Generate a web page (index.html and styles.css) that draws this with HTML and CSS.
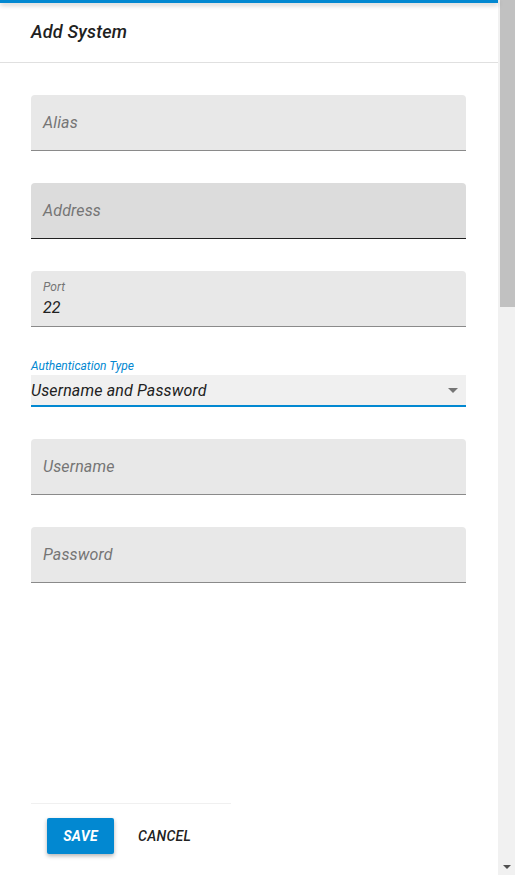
FILE: index.html
```html
<!DOCTYPE html>
<html>
<head>
<meta charset="utf-8">
<link rel="stylesheet" href="styles.css">
</head>
<body>
<div class="page">
  <div class="dialog">
    <div class="topbar"></div>
    <div class="header"><h1 class="title">Add System</h1></div>
    <form class="form">
      <div class="field"><span class="placeholder">Alias</span></div>
      <div class="field field-hover"><span class="placeholder">Address</span></div>
      <div class="field field-filled">
        <span class="small-label">Port</span>
        <span class="value">22</span>
      </div>
      <div class="select-wrap">
        <span class="select-label">Authentication Type</span>
        <div class="select">
          <span class="select-value">Username and Password</span>
          <span class="caret"></span>
        </div>
      </div>
      <div class="field"><span class="placeholder">Username</span></div>
      <div class="field"><span class="placeholder">Password</span></div>
    </form>
    <div class="footer">
      <div class="footer-line"></div>
      <div class="actions">
        <button type="button" class="btn btn-save">SAVE</button>
        <button type="button" class="btn btn-cancel">CANCEL</button>
      </div>
    </div>
  </div>
  <div class="scrollbar">
    <div class="thumb"></div>
    <div class="track"></div>
    <div class="arrow-down"></div>
  </div>
</div>
</body>
</html>
```

FILE: styles.css
```css
* { box-sizing: border-box; }
html, body { margin: 0; padding: 0; height: 875px; overflow: hidden; }
body {
  font-family: Roboto, "Liberation Sans", sans-serif;
  font-style: italic;
  background: #fff;
  color: #212121;
}
.page {
  display: flex;
  width: 515px;
  height: 875px;
}
.dialog {
  width: 498px;
  height: 875px;
  display: flex;
  flex-direction: column;
  background: #fff;
}
.topbar {
  height: 3px;
  background: #0288d1;
  box-shadow: 0 2px 5px rgba(0,0,0,0.25);
  position: relative;
  z-index: 1;
}
.header {
  height: 60px;
  border-bottom: 1px solid #e0e0e0;
  display: flex;
  align-items: center;
  padding-left: 31px;
}
.title {
  margin: 0;
  font-size: 18px;
  font-weight: 500;
  font-style: italic;
  letter-spacing: 0.2px;
  color: #212121;
  padding-bottom: 2px;
}
.form {
  padding: 32px 32px 0 31px;
  display: flex;
  flex-direction: column;
  gap: 32px;
  width: 435px;
  box-sizing: content-box;
}
.field {
  height: 56px;
  background: #e8e8e8;
  border-radius: 4px 4px 0 0;
  border-bottom: 1px solid #8a8a8a;
  display: flex;
  flex-direction: column;
  justify-content: center;
  padding: 0 12px;
}
.field-hover {
  background: #dcdcdc;
  border-bottom-color: #212121;
}
.placeholder {
  font-size: 16px;
  letter-spacing: 0.15px;
  color: #757575;
  padding-bottom: 1px;
}
.field-filled {
  justify-content: flex-start;
  padding-top: 9px;
}
.small-label {
  font-size: 12px;
  color: #757575;
  line-height: 14px;
}
.value {
  font-size: 16px;
  letter-spacing: 0.15px;
  color: #212121;
  line-height: 20px;
  margin-top: 4px;
}
.select-wrap {
  display: flex;
  flex-direction: column;
}
.select-label {
  font-size: 12px;
  color: #0288d1;
  line-height: 14px;
  margin-bottom: 2px;
}
.select {
  height: 32px;
  background: #f0f0f0;
  border-bottom: 2px solid #0288d1;
  display: flex;
  align-items: center;
  justify-content: space-between;
  padding-right: 8px;
}
.select-value {
  font-size: 16px;
  letter-spacing: 0.15px;
  color: #212121;
}
.caret {
  width: 0;
  height: 0;
  border-left: 5px solid transparent;
  border-right: 5px solid transparent;
  border-top: 5px solid #757575;
}
.footer {
  margin-top: auto;
  padding: 0 0 21px 31px;
}
.footer-line {
  width: 200px;
  border-top: 1px solid #f0f0f0;
}
.actions {
  display: flex;
  align-items: center;
  gap: 24px;
  padding: 14px 0 0 16px;
}
.btn {
  font-family: Roboto, "Liberation Sans", sans-serif;
  font-style: italic;
  font-size: 14px;
  letter-spacing: 0.3px;
  border: none;
  cursor: pointer;
}
.btn-save {
  background: #0288d1;
  color: #fff;
  font-weight: 700;
  width: 67px;
  height: 36px;
  border-radius: 2px;
  box-shadow: 0 2px 4px rgba(0,0,0,0.3);
}
.btn-cancel {
  background: transparent;
  color: #212121;
  font-weight: 500;
  padding: 0;
}
.scrollbar {
  width: 17px;
  height: 875px;
  background: #f1f1f1;
  display: flex;
  flex-direction: column;
  align-items: center;
}
.thumb {
  width: 15px;
  height: 307px;
  background: #c1c1c1;
  margin-left: 1px;
}
.track { flex: 1; }
.arrow-down {
  width: 0;
  height: 0;
  border-left: 4px solid transparent;
  border-right: 4px solid transparent;
  border-top: 4px solid #505050;
  margin-bottom: 6px;
}
```
